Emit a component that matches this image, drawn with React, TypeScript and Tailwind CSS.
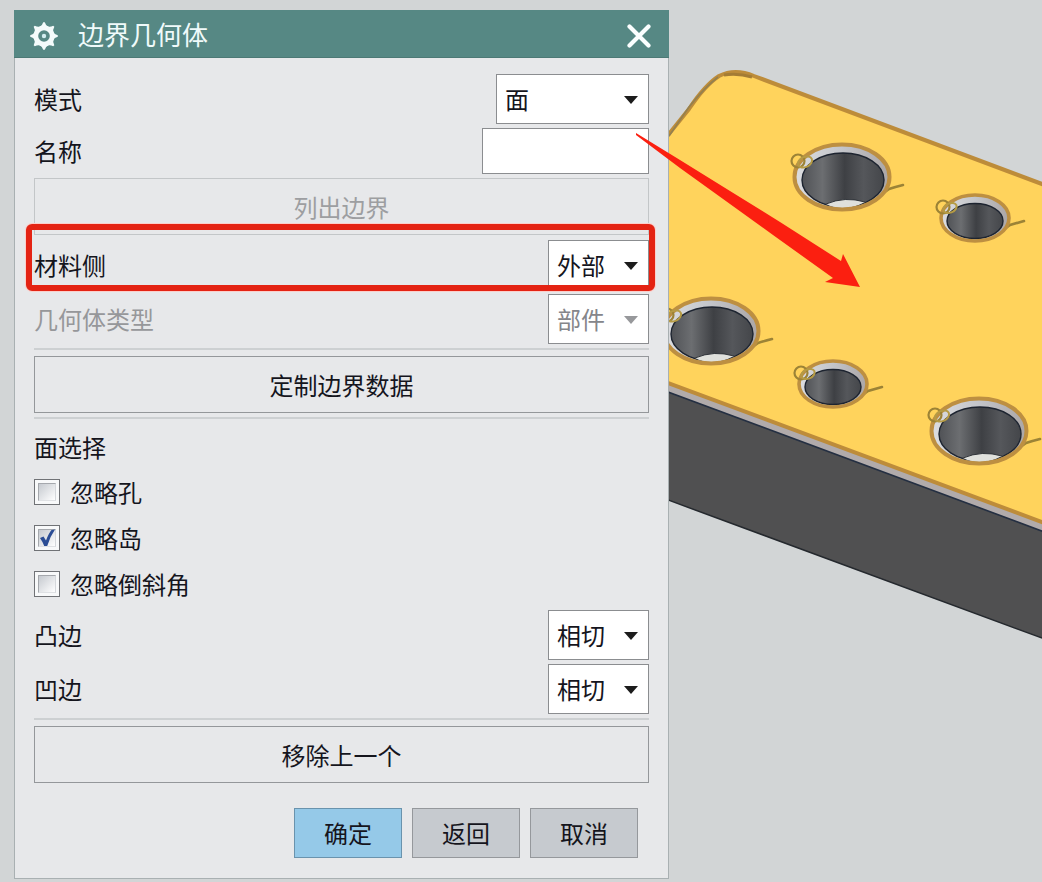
import type { ReactNode } from "react";
import { clsx } from "clsx";

function GearIcon() {
  return (
    <svg viewBox="0 0 28 28" className="mt-1 h-7 w-7 shrink-0" aria-hidden="true">
      <g fill="#f4fbfb">
        <circle cx="14" cy="14" r="10.4" />
        {[0, 45, 90, 135, 180, 225, 270, 315].map((deg) => (
          <path key={deg} d="M9.4 5 Q12.4 3.6 13.2 0.2 H14.8 Q15.6 3.6 18.6 5 Z" transform={`rotate(${deg} 14 14)`} />
        ))}
      </g>
      <circle cx="14" cy="14" r="5.8" fill="#568884" />
      <circle cx="14" cy="14" r="2.2" fill="#d3eef0" />
    </svg>
  );
}

function Row({ id, label, disabled, highlight, children }: {
  id: string;
  label: string;
  disabled?: boolean;
  highlight?: boolean;
  children: ReactNode;
}) {
  return (
    <div className="relative flex items-center justify-between">
      <label htmlFor={id} className={clsx(disabled && "text-[#96979a]")}>
        {label}
      </label>
      {children}
      {highlight && (
        <span className="pointer-events-none absolute -top-4 -right-1.5 -bottom-px -left-2 rounded-md border-6 border-[#e42313] ring-1 ring-[#fbcfcb]" />
      )}
    </div>
  );
}

function Select({ id, options, wide, disabled }: {
  id: string;
  options: string[];
  wide?: boolean;
  disabled?: boolean;
}) {
  return (
    <div className={clsx("relative", wide ? "w-[153px]" : "w-[101px]")}>
      <select
        id={id}
        disabled={disabled}
        className="block h-[50px] w-full appearance-none border border-[#8b8d90] bg-white pl-2 text-[#15151d] disabled:text-[#85868a] disabled:opacity-100"
      >
        {options.map((o) => (
          <option key={o}>{o}</option>
        ))}
      </select>
      <svg
        viewBox="0 0 14 8"
        className={clsx(
          "pointer-events-none absolute top-[22px] right-[11px] h-2 w-3.5",
          disabled ? "text-[#97989b]" : "text-[#1c1c1c]"
        )}
        aria-hidden="true"
      >
        <path d="M0 0 H14 L7 8 Z" fill="currentColor" />
      </svg>
    </div>
  );
}

function Checkbox({ label, checked }: { label: string; checked?: boolean }) {
  return (
    <label className="flex h-[46px] items-center gap-2.5">
      <span className="relative block h-[26px] w-[26px]">
        <input
          type="checkbox"
          defaultChecked={checked}
          className="peer block h-full w-full appearance-none border border-[#707276] bg-[#f8f9fa]"
        />
        <span className="pointer-events-none absolute inset-1 border border-t-[#a5a8ad] border-r-[#d5d8dc] border-b-[#dfe1e4] border-l-[#a5a8ad] bg-linear-to-br from-[#c6cad0] to-white" />
        <svg
          viewBox="0 0 26 26"
          className="pointer-events-none absolute inset-0 hidden h-full w-full peer-checked:block"
          aria-hidden="true"
        >
          <path d="M6 13 L9.5 11.5 L12 15.5 Q14.5 8.5 17.5 5 L21 4.5 Q16 11.5 13.2 21 L10.2 21 Q8.5 16.5 6 13 Z" fill="#2b4d95" />
        </svg>
      </span>
      {label}
    </label>
  );
}

function Separator() {
  return <hr className="mt-1 mb-1.5 border-0 border-t-2 border-[#cdd0d2]" />;
}

function WideButton({ children, disabled }: { children: ReactNode; disabled?: boolean }) {
  return (
    <button
      disabled={disabled}
      className="block h-[57px] w-full border border-[#94979a] disabled:mb-px disabled:border-[#c3c6c8] disabled:text-[#9d9ea1]"
    >
      {children}
    </button>
  );
}

function Dialog() {
  return (
    <section className="border border-[#a9b0b2] bg-[#e7e8ea] text-2xl text-[#15151d]">
      <header className="-mx-px -mt-px flex h-12 items-center border-b border-[#4c7975] bg-[#568884] pr-[18px] pl-4 text-[#f0fafa]">
        <GearIcon />
        <h1 className="ml-5 flex-1 text-[26px] leading-none">边界几何体</h1>
        <button aria-label="关闭">
          <svg viewBox="0 0 24 24" className="mt-1 h-6 w-6" aria-hidden="true">
            <path d="M2.5 2.5 L21.5 21.5 M21.5 2.5 L2.5 21.5" stroke="#fbffff" strokeWidth="4.2" strokeLinecap="round" />
          </svg>
        </button>
      </header>

      <form className="px-[19px] pt-4 pb-5" onSubmit={(e) => e.preventDefault()}>
        <div className="flex flex-col gap-1">
          <Row id="mode" label="模式">
            <Select id="mode" options={["面", "边"]} wide />
          </Row>
          <Row id="name" label="名称">
            <input id="name" type="text" className="h-[46px] w-[167px] border border-[#8b8d90] bg-white px-2" />
          </Row>
          <WideButton disabled>列出边界</WideButton>
          <Row id="material" label="材料侧" highlight>
            <Select id="material" options={["外部", "内部"]} />
          </Row>
          <Row id="type" label="几何体类型" disabled>
            <Select id="type" options={["部件"]} disabled />
          </Row>
        </div>

        <Separator />
        <WideButton>定制边界数据</WideButton>
        <Separator />

        <fieldset>
          <legend className="flex h-11 items-center">面选择</legend>
          <Checkbox label="忽略孔" />
          <Checkbox label="忽略岛" checked />
          <Checkbox label="忽略倒斜角" />
        </fieldset>

        <div className="mt-[3px] flex flex-col gap-1">
          <Row id="convex" label="凸边">
            <Select id="convex" options={["相切", "对中"]} />
          </Row>
          <Row id="concave" label="凹边">
            <Select id="concave" options={["相切", "对中"]} />
          </Row>
        </div>

        <Separator />
        <WideButton>移除上一个</WideButton>

        <div className="mt-[25px] flex justify-end gap-2.5 pr-[11px]">
          <button className="h-[50px] w-[108px] border border-[#6a93ad] bg-[#95c9e8]">确定</button>
          <button className="h-[50px] w-[108px] border border-[#95989c] bg-[#c6cacf]">返回</button>
          <button className="h-[50px] w-[108px] border border-[#95989c] bg-[#c6cacf]">取消</button>
        </div>
      </form>
    </section>
  );
}

function BigHole({ x, y }: { x: number; y: number }) {
  return (
    <g transform={`translate(${x} ${y})`} fill="none">
      <path d="M28 26 Q40 17 47 12 Q53 10 61 8" stroke="#9c8336" strokeWidth="2.6" strokeLinecap="round" />
      <ellipse rx="47.5" ry="32.5" fill="url(#chamfer)" />
      <ellipse cx="1" cy="3" rx="41" ry="27" fill="url(#bore)" stroke="#1d2430" strokeWidth="1.4" />
      <path d="M-16 27 Q3 19 23 25 Q12 31 1 31 Q-9 31 -16 27 Z" fill="#dfe0dc" />
      <path d="M-16 27 Q3 19 23 25" stroke="#30343a" strokeWidth="1" />
      <ellipse rx="47.5" ry="32.5" stroke="#bd8f41" strokeWidth="4" />
      <circle cx="-44" cy="-16" r="6.5" stroke="#9c8336" strokeWidth="2.2" />
      <ellipse cx="-37" cy="-15" rx="7.5" ry="5" transform="rotate(-25 -37 -15)" stroke="#b59b45" strokeWidth="2" />
    </g>
  );
}

function SmallHole({ x, y }: { x: number; y: number }) {
  return (
    <g transform={`translate(${x} ${y})`} fill="none">
      <path d="M20 18 Q28 12 35 7 L49 3" stroke="#9c8336" strokeWidth="2.6" strokeLinecap="round" />
      <ellipse rx="34" ry="23" fill="url(#chamfer)" />
      <ellipse cx="0" cy="3" rx="28" ry="17.5" fill="url(#bore)" stroke="#1d2430" strokeWidth="1.4" />
      <ellipse rx="34" ry="23" stroke="#bd8f41" strokeWidth="3.6" />
      <circle cx="-32" cy="-11" r="6.5" stroke="#9c8336" strokeWidth="2.2" />
      <ellipse cx="-25" cy="-10" rx="7" ry="4.6" transform="rotate(-25 -25 -10)" stroke="#b59b45" strokeWidth="2" />
    </g>
  );
}

// Machined plate; the arrow starts over the dialog, so the svg may overflow to the left
function Scene() {
  return (
    <svg
      viewBox="669 0 373 882"
      className="pointer-events-none relative z-10 block h-auto w-full overflow-visible"
      role="img"
      aria-label="零件模型"
    >
      <defs>
        <clipPath id="view">
          <rect x="669" y="0" width="373" height="882" />
        </clipPath>
        <linearGradient id="bore">
          <stop offset="0" stopColor="#505256" />
          <stop offset="0.25" stopColor="#6c6e71" />
          <stop offset="0.52" stopColor="#3e4044" />
          <stop offset="0.75" stopColor="#55575b" />
          <stop offset="1" stopColor="#44464a" />
        </linearGradient>
        <linearGradient id="chamfer">
          <stop offset="0" stopColor="#dcdde0" />
          <stop offset="0.5" stopColor="#c3c5ca" />
          <stop offset="1" stopColor="#aba6a6" />
        </linearGradient>
      </defs>
      <g clipPath="url(#view)">
        <path d="M660 379 L1050 525 V641 L660 497 Z" fill="#505051" stroke="#25292e" strokeWidth="1.5" />
        <path d="M660 378 L1050 522 V534 L660 389 Z" fill="#b1abab" />
        <path d="M660 389 L1050 534" stroke="#242f42" strokeWidth="1.6" />
        <path
          d="M660 145 L689 109 Q705 85 719 76 Q735 68 754 76 L1050 187 V525 L660 380 Z"
          fill="#ffd35c"
          stroke="#bd8c3a"
          strokeWidth="4"
        />
        <path d="M669 136 L689 107 Q705 87 718 77" fill="none" stroke="#94804f" strokeWidth="1.6" />
        <path d="M724 75 Q738 73 752 77" fill="none" stroke="#a47c35" strokeWidth="3" />
        <BigHole x={842} y={177} />
        <SmallHole x={975} y={218} />
        <BigHole x={711} y={331} />
        <SmallHole x={833} y={384} />
        <BigHole x={979} y={431} />
      </g>
      <path
        d="M636 133 L680 160 L730 191 L780 222 L841 261 L843 254 L860 287 L825 282 L833 278 L773 235 L730 204 L680 168 L636 135 Z"
        fill="#fb1f10"
      />
    </svg>
  );
}

export default function App() {
  return (
    <main
      lang="zh-CN"
      className="grid min-h-screen grid-cols-[minmax(0,655fr)_minmax(0,373fr)] items-start overflow-hidden bg-[#d2d5d6] pl-3.5 font-['Noto_Sans_CJK_SC',sans-serif]"
    >
      <div className="pt-2.5">
        <Dialog />
      </div>
      <Scene />
    </main>
  );
}
